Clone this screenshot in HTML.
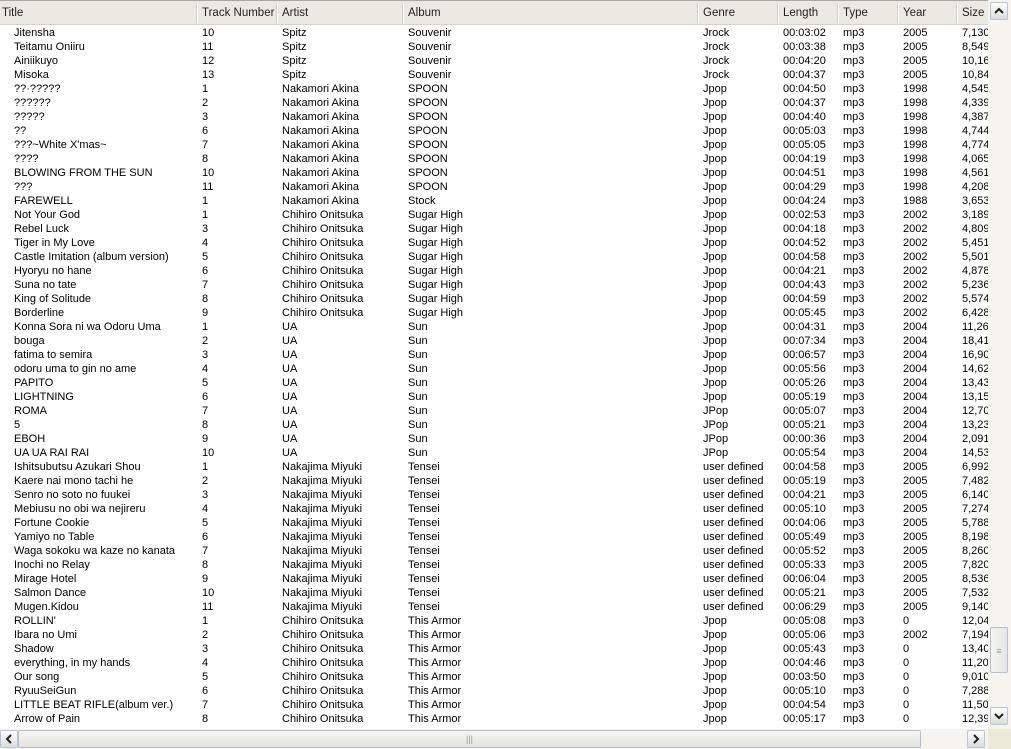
<!DOCTYPE html>
<html><head><meta charset="utf-8"><style>
body{margin:0;width:1011px;height:749px;overflow:hidden;background:#fff;font-family:"Liberation Sans",Tahoma,sans-serif;font-size:11px;color:#000;position:relative}
.hdr{position:absolute;left:0;top:0;width:988px;height:25px;background:#ebeae2;border-top:1px solid #a7a6aa;border-bottom:1px solid #d6d3c8;box-sizing:border-box}
.hdr div{position:absolute;top:0;height:23px;line-height:25px;font-size:11.5px;color:#222}
.hdr i{position:absolute;top:2px;width:1px;height:20px;background:#fff;border-left:1px solid #d2cfc5}
table{position:absolute;left:0;top:26px;border-collapse:collapse;table-layout:fixed;width:988px}
td{height:14px;padding:0 0 0 5px;white-space:nowrap;overflow:hidden;line-height:14px}
td:first-child{padding-left:14px}
.vs{position:absolute;left:988px;top:0;width:23px;height:729px;background:#f5f4ee}
.hs{position:absolute;left:0;top:729px;width:988px;height:20px;background:#f5f4ee}
.btn{position:absolute;width:18px;height:18px;border:1px solid #b8c4dc;border-radius:2px;background:linear-gradient(#fdfdfd,#dcdcd8);box-sizing:border-box}
.btn svg{position:absolute;left:3px;top:3px}
.th{position:absolute;border:1px solid #b6bfd2;border-radius:2px;background:linear-gradient(90deg,#f4f4f2,#e6e6e1);box-sizing:border-box;color:#999;font-size:9px;text-align:center}
</style></head><body>
<div class="hdr">
<div style="left:2px">Title</div><i style="left:196px"></i>
<div style="left:202px">Track Number</div><i style="left:276px"></i>
<div style="left:282px">Artist</div><i style="left:402px"></i>
<div style="left:408px">Album</div><i style="left:697px"></i>
<div style="left:703px">Genre</div><i style="left:777px"></i>
<div style="left:783px">Length</div><i style="left:837px"></i>
<div style="left:843px">Type</div><i style="left:897px"></i>
<div style="left:903px">Year</div><i style="left:956px"></i>
<div style="left:962px">Size</div>
</div>
<table>
<colgroup><col style="width:197px"><col style="width:80px"><col style="width:126px"><col style="width:295px"><col style="width:80px"><col style="width:60px"><col style="width:60px"><col style="width:59px"><col style="width:31px"></colgroup>
<tr><td>Jitensha</td><td>10</td><td>Spitz</td><td>Souvenir</td><td>Jrock</td><td>00:03:02</td><td>mp3</td><td>2005</td><td>7,130</td></tr>
<tr><td>Teitamu Oniiru</td><td>11</td><td>Spitz</td><td>Souvenir</td><td>Jrock</td><td>00:03:38</td><td>mp3</td><td>2005</td><td>8,549</td></tr>
<tr><td>Ainiikuyo</td><td>12</td><td>Spitz</td><td>Souvenir</td><td>Jrock</td><td>00:04:20</td><td>mp3</td><td>2005</td><td>10,16</td></tr>
<tr><td>Misoka</td><td>13</td><td>Spitz</td><td>Souvenir</td><td>Jrock</td><td>00:04:37</td><td>mp3</td><td>2005</td><td>10,84</td></tr>
<tr><td>??·?????</td><td>1</td><td>Nakamori Akina</td><td>SPOON</td><td>Jpop</td><td>00:04:50</td><td>mp3</td><td>1998</td><td>4,545</td></tr>
<tr><td>??????</td><td>2</td><td>Nakamori Akina</td><td>SPOON</td><td>Jpop</td><td>00:04:37</td><td>mp3</td><td>1998</td><td>4,339</td></tr>
<tr><td>?????</td><td>3</td><td>Nakamori Akina</td><td>SPOON</td><td>Jpop</td><td>00:04:40</td><td>mp3</td><td>1998</td><td>4,387</td></tr>
<tr><td>??</td><td>6</td><td>Nakamori Akina</td><td>SPOON</td><td>Jpop</td><td>00:05:03</td><td>mp3</td><td>1998</td><td>4,744</td></tr>
<tr><td>???~White X'mas~</td><td>7</td><td>Nakamori Akina</td><td>SPOON</td><td>Jpop</td><td>00:05:05</td><td>mp3</td><td>1998</td><td>4,774</td></tr>
<tr><td>????</td><td>8</td><td>Nakamori Akina</td><td>SPOON</td><td>Jpop</td><td>00:04:19</td><td>mp3</td><td>1998</td><td>4,065</td></tr>
<tr><td>BLOWING FROM THE SUN</td><td>10</td><td>Nakamori Akina</td><td>SPOON</td><td>Jpop</td><td>00:04:51</td><td>mp3</td><td>1998</td><td>4,561</td></tr>
<tr><td>???</td><td>11</td><td>Nakamori Akina</td><td>SPOON</td><td>Jpop</td><td>00:04:29</td><td>mp3</td><td>1998</td><td>4,208</td></tr>
<tr><td>FAREWELL</td><td>1</td><td>Nakamori Akina</td><td>Stock</td><td>Jpop</td><td>00:04:24</td><td>mp3</td><td>1988</td><td>3,653</td></tr>
<tr><td>Not Your God</td><td>1</td><td>Chihiro Onitsuka</td><td>Sugar High</td><td>Jpop</td><td>00:02:53</td><td>mp3</td><td>2002</td><td>3,189</td></tr>
<tr><td>Rebel Luck</td><td>3</td><td>Chihiro Onitsuka</td><td>Sugar High</td><td>Jpop</td><td>00:04:18</td><td>mp3</td><td>2002</td><td>4,809</td></tr>
<tr><td>Tiger in My Love</td><td>4</td><td>Chihiro Onitsuka</td><td>Sugar High</td><td>Jpop</td><td>00:04:52</td><td>mp3</td><td>2002</td><td>5,451</td></tr>
<tr><td>Castle Imitation (album version)</td><td>5</td><td>Chihiro Onitsuka</td><td>Sugar High</td><td>Jpop</td><td>00:04:58</td><td>mp3</td><td>2002</td><td>5,501</td></tr>
<tr><td>Hyoryu no hane</td><td>6</td><td>Chihiro Onitsuka</td><td>Sugar High</td><td>Jpop</td><td>00:04:21</td><td>mp3</td><td>2002</td><td>4,878</td></tr>
<tr><td>Suna no tate</td><td>7</td><td>Chihiro Onitsuka</td><td>Sugar High</td><td>Jpop</td><td>00:04:43</td><td>mp3</td><td>2002</td><td>5,236</td></tr>
<tr><td>King of Solitude</td><td>8</td><td>Chihiro Onitsuka</td><td>Sugar High</td><td>Jpop</td><td>00:04:59</td><td>mp3</td><td>2002</td><td>5,574</td></tr>
<tr><td>Borderline</td><td>9</td><td>Chihiro Onitsuka</td><td>Sugar High</td><td>Jpop</td><td>00:05:45</td><td>mp3</td><td>2002</td><td>6,428</td></tr>
<tr><td>Konna Sora ni wa Odoru Uma</td><td>1</td><td>UA</td><td>Sun</td><td>Jpop</td><td>00:04:31</td><td>mp3</td><td>2004</td><td>11,26</td></tr>
<tr><td>bouga</td><td>2</td><td>UA</td><td>Sun</td><td>Jpop</td><td>00:07:34</td><td>mp3</td><td>2004</td><td>18,41</td></tr>
<tr><td>fatima to semira</td><td>3</td><td>UA</td><td>Sun</td><td>Jpop</td><td>00:06:57</td><td>mp3</td><td>2004</td><td>16,90</td></tr>
<tr><td>odoru uma to gin no ame</td><td>4</td><td>UA</td><td>Sun</td><td>Jpop</td><td>00:05:56</td><td>mp3</td><td>2004</td><td>14,62</td></tr>
<tr><td>PAPITO</td><td>5</td><td>UA</td><td>Sun</td><td>Jpop</td><td>00:05:26</td><td>mp3</td><td>2004</td><td>13,43</td></tr>
<tr><td>LIGHTNING</td><td>6</td><td>UA</td><td>Sun</td><td>Jpop</td><td>00:05:19</td><td>mp3</td><td>2004</td><td>13,15</td></tr>
<tr><td>ROMA</td><td>7</td><td>UA</td><td>Sun</td><td>JPop</td><td>00:05:07</td><td>mp3</td><td>2004</td><td>12,70</td></tr>
<tr><td>5</td><td>8</td><td>UA</td><td>Sun</td><td>JPop</td><td>00:05:21</td><td>mp3</td><td>2004</td><td>13,23</td></tr>
<tr><td>EBOH</td><td>9</td><td>UA</td><td>Sun</td><td>JPop</td><td>00:00:36</td><td>mp3</td><td>2004</td><td>2,091</td></tr>
<tr><td>UA UA RAI RAI</td><td>10</td><td>UA</td><td>Sun</td><td>JPop</td><td>00:05:54</td><td>mp3</td><td>2004</td><td>14,53</td></tr>
<tr><td>Ishitsubutsu Azukari Shou</td><td>1</td><td>Nakajima Miyuki</td><td>Tensei</td><td>user defined</td><td>00:04:58</td><td>mp3</td><td>2005</td><td>6,992</td></tr>
<tr><td>Kaere nai mono tachi he</td><td>2</td><td>Nakajima Miyuki</td><td>Tensei</td><td>user defined</td><td>00:05:19</td><td>mp3</td><td>2005</td><td>7,482</td></tr>
<tr><td>Senro no soto no fuukei</td><td>3</td><td>Nakajima Miyuki</td><td>Tensei</td><td>user defined</td><td>00:04:21</td><td>mp3</td><td>2005</td><td>6,140</td></tr>
<tr><td>Mebiusu no obi wa nejireru</td><td>4</td><td>Nakajima Miyuki</td><td>Tensei</td><td>user defined</td><td>00:05:10</td><td>mp3</td><td>2005</td><td>7,274</td></tr>
<tr><td>Fortune Cookie</td><td>5</td><td>Nakajima Miyuki</td><td>Tensei</td><td>user defined</td><td>00:04:06</td><td>mp3</td><td>2005</td><td>5,788</td></tr>
<tr><td>Yamiyo no Table</td><td>6</td><td>Nakajima Miyuki</td><td>Tensei</td><td>user defined</td><td>00:05:49</td><td>mp3</td><td>2005</td><td>8,198</td></tr>
<tr><td>Waga sokoku wa kaze no kanata</td><td>7</td><td>Nakajima Miyuki</td><td>Tensei</td><td>user defined</td><td>00:05:52</td><td>mp3</td><td>2005</td><td>8,260</td></tr>
<tr><td>Inochi no Relay</td><td>8</td><td>Nakajima Miyuki</td><td>Tensei</td><td>user defined</td><td>00:05:33</td><td>mp3</td><td>2005</td><td>7,820</td></tr>
<tr><td>Mirage Hotel</td><td>9</td><td>Nakajima Miyuki</td><td>Tensei</td><td>user defined</td><td>00:06:04</td><td>mp3</td><td>2005</td><td>8,536</td></tr>
<tr><td>Salmon Dance</td><td>10</td><td>Nakajima Miyuki</td><td>Tensei</td><td>user defined</td><td>00:05:21</td><td>mp3</td><td>2005</td><td>7,532</td></tr>
<tr><td>Mugen.Kidou</td><td>11</td><td>Nakajima Miyuki</td><td>Tensei</td><td>user defined</td><td>00:06:29</td><td>mp3</td><td>2005</td><td>9,140</td></tr>
<tr><td>ROLLIN'</td><td>1</td><td>Chihiro Onitsuka</td><td>This Armor</td><td>Jpop</td><td>00:05:08</td><td>mp3</td><td>0</td><td>12,04</td></tr>
<tr><td>Ibara no Umi</td><td>2</td><td>Chihiro Onitsuka</td><td>This Armor</td><td>Jpop</td><td>00:05:06</td><td>mp3</td><td>2002</td><td>7,194</td></tr>
<tr><td>Shadow</td><td>3</td><td>Chihiro Onitsuka</td><td>This Armor</td><td>Jpop</td><td>00:05:43</td><td>mp3</td><td>0</td><td>13,40</td></tr>
<tr><td>everything, in my hands</td><td>4</td><td>Chihiro Onitsuka</td><td>This Armor</td><td>Jpop</td><td>00:04:46</td><td>mp3</td><td>0</td><td>11,20</td></tr>
<tr><td>Our song</td><td>5</td><td>Chihiro Onitsuka</td><td>This Armor</td><td>Jpop</td><td>00:03:50</td><td>mp3</td><td>0</td><td>9,010</td></tr>
<tr><td>RyuuSeiGun</td><td>6</td><td>Chihiro Onitsuka</td><td>This Armor</td><td>Jpop</td><td>00:05:10</td><td>mp3</td><td>0</td><td>7,288</td></tr>
<tr><td>LITTLE BEAT RIFLE(album ver.)</td><td>7</td><td>Chihiro Onitsuka</td><td>This Armor</td><td>Jpop</td><td>00:04:54</td><td>mp3</td><td>0</td><td>11,50</td></tr>
<tr><td>Arrow of Pain</td><td>8</td><td>Chihiro Onitsuka</td><td>This Armor</td><td>Jpop</td><td>00:05:17</td><td>mp3</td><td>0</td><td>12,39</td></tr>
</table>
<div class="vs">
<div class="btn" style="left:2px;top:2px"><svg width="10" height="10"><path d="M1 7L5 3L9 7" fill="none" stroke="#222" stroke-width="2"/></svg></div>
<div class="th" style="left:2px;top:627px;width:18px;height:46px;line-height:46px">&#8801;</div>
<div class="btn" style="left:2px;top:707px"><svg width="10" height="10"><path d="M1 3L5 7L9 3" fill="none" stroke="#222" stroke-width="2"/></svg></div>
</div>
<div class="hs">
<div class="btn" style="left:0px;top:1px"><svg width="10" height="10"><path d="M7 1L3 5L7 9" fill="none" stroke="#222" stroke-width="2"/></svg></div>
<div class="th" style="left:18px;top:1px;width:903px;height:18px;line-height:16px;background:linear-gradient(#f6f6f4,#e2e2dc)">|||</div>
<div class="btn" style="left:967px;top:1px"><svg width="10" height="10"><path d="M3 1L7 5L3 9" fill="none" stroke="#222" stroke-width="2"/></svg></div>
</div>
<div style="position:absolute;left:988px;top:729px;width:23px;height:20px;background:#ece9d8"></div>
</body></html>
